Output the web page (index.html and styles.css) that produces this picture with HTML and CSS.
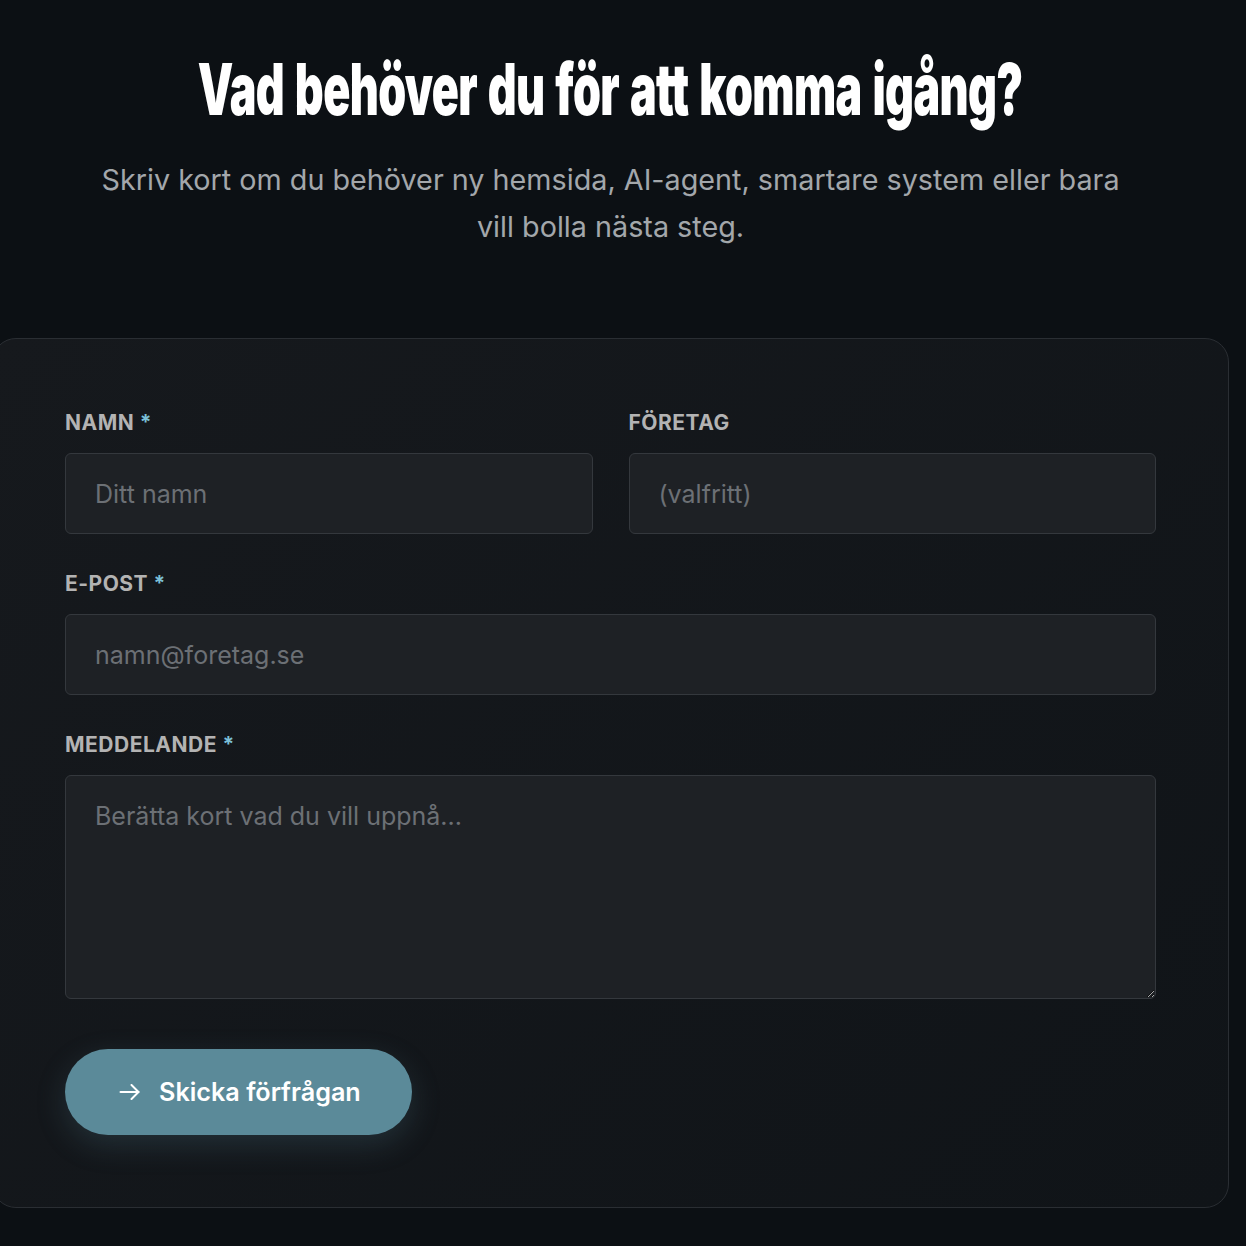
FILE: index.html
```html
<!DOCTYPE html>
<html lang="sv">
<head>
  <meta charset="UTF-8" />
  <meta name="viewport" content="width=device-width, initial-scale=1.0" />
  <title>Kontakt</title>
  <link rel="stylesheet" href="styles.css">
</head>
<body>
  <section class="contact">
    <div class="contact-head">
      <h1 class="title"><span>Vad behöver du för att komma igång?</span></h1>
      <p class="lead">Skriv kort om du behöver ny hemsida, AI-agent, smartare system eller bara vill bolla nästa steg.</p>
    </div>

    <form class="card" onsubmit="return false">
      <div class="row two">
        <div class="field">
          <label for="namn">Namn <span class="req">*</span></label>
          <input id="namn" type="text" placeholder="Ditt namn" />
        </div>
        <div class="field">
          <label for="foretag">Företag</label>
          <input id="foretag" type="text" placeholder="(valfritt)" />
        </div>
      </div>

      <div class="field">
        <label for="epost">E-post <span class="req">*</span></label>
        <input id="epost" type="email" placeholder="namn@foretag.se" />
      </div>

      <div class="field">
        <label for="meddelande">Meddelande <span class="req">*</span></label>
        <textarea id="meddelande" placeholder="Berätta kort vad du vill uppnå..."></textarea>
      </div>

      <div class="actions">
        <button type="submit" class="send">
          <svg width="21" height="16" viewBox="0 0 21 16" fill="none" stroke="currentColor" stroke-width="2" stroke-linecap="round" stroke-linejoin="round"><path d="M1.5 8h18"/><path d="M12.5 1l7 7-7 7"/></svg>
          Skicka förfrågan
        </button>
      </div>
    </form>
  </section>
</body>
</html>
```

FILE: styles.css
```css
* {
  margin: 0;
  padding: 0;
  box-sizing: border-box;
}

html, body {
  background-color: #0c1014;
  font-family: Inter, "Noto Sans", sans-serif;
  color: #fff;
}

.contact {
  width: 1237px;
  margin-left: -8px;
  padding-top: 44px;
}

.contact-head {
  text-align: center;
  padding: 0 100px;
}

/* rubriken ska vara smal och fet, skalas ihop i sidled */
.title {
  display: flex;
  justify-content: center;
  font-size: 72px;
  font-weight: 900;
  line-height: 90px;
  letter-spacing: -1px;
  word-spacing: 4px;
  white-space: nowrap;
}

.title span {
  display: inline-block;
  transform: scaleX(0.622);
}

.lead {
  margin-top: 22px;
  font-size: 28.75px;
  line-height: 47px;
  color: #a3a7ab;
}

.card {
  margin-top: 88px;
  padding: 72px;
  border: 1px solid #2a2e33;
  border-radius: 24px;
  background: linear-gradient(135deg, #16191d 0%, #101418 100%);
  display: flex;
  flex-direction: column;
  gap: 38px;
}

.row.two {
  display: grid;
  grid-template-columns: 1fr 1fr;
  gap: 36px;
}

.field {
  display: flex;
  flex-direction: column;
}

.field label {
  font-size: 21px;
  font-weight: 700;
  line-height: 24px;
  letter-spacing: 0.5px;
  text-transform: uppercase;
  color: #b3b3b3;
  margin-bottom: 18px;
}

.req {
  color: #7cc0d8;
}

.field input,
.field textarea {
  width: 100%;
  height: 81px;
  padding: 0 29px;
  font-family: inherit;
  font-size: 25px;
  color: #e6e6e6;
  background: #1e2125;
  border: 1px solid #34383d;
  border-radius: 6px;
  outline: none;
}

.field textarea {
  height: 224px;
  padding: 24px 29px;
  resize: vertical;
  line-height: 32px;
}

.field input::placeholder,
.field textarea::placeholder {
  color: #6c7075;
}

.actions {
  margin-top: 12px;
}

.send {
  display: inline-flex;
  align-items: center;
  gap: 19px;
  height: 86px;
  padding: 0 51px 0 54px;
  border: none;
  border-radius: 43px;
  background: #5b8a99;
  color: #fff;
  font-family: inherit;
  font-size: 25.2px;
  font-weight: 600;
  box-shadow: 0 10px 30px rgba(91, 138, 153, 0.22);
  cursor: pointer;
}
```
